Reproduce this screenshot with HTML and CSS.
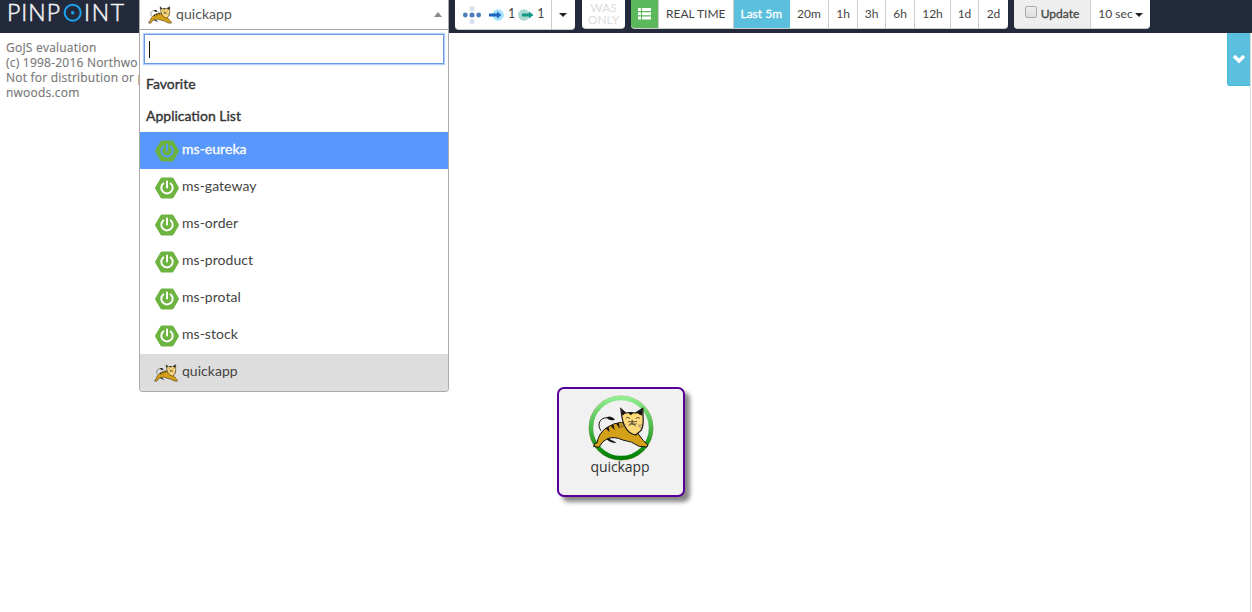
FILE: index.html
```html
<!DOCTYPE html>
<html lang="en">
<head>
<meta charset="utf-8">
<title>Pinpoint</title>
<link rel="stylesheet" href="styles.css">
</head>
<body>
<svg class="defs" width="0" height="0">
  <symbol id="cat" viewBox="36 50 168 125">
    <path d="M61 121C49 103 57 82 80 82l10 1" fill="none" stroke="#111" stroke-width="3"/>
    <path d="M80 80q10-6 23 7l-3 3q-15 0-20-6z" fill="#111"/>
    <path d="M84 135q0 14 16 17l8 7-16-3q-13-5-18-19z" fill="#111"/>
    <path d="M39 168l5-9 5-1q6-30 29-46 21-14 44-16l28 12q20 15 38 42l14 14-3 6-23-2q-22-16-49-19-26-12-46-4-16 7-23 22l-4 4z" fill="#d4a017" stroke="#111" stroke-width="3"/>
    <path d="M75 114l12 11-2-14zM91 107l12 13-4-17zM107 100l11 15-3-17z" fill="#111"/>
    <path d="M121 55l14 13q15-3 30 0l22-14 1 31q1 24-7 36l-16 13q-20-3-33-27-8-19-11-52z" fill="#ffda7a" stroke="#111" stroke-width="3.500"/>
    <path d="M122 57l13 11-9 8zM186 56l-18 12 17 8zM143 67l8 8 8-8z" fill="#111"/>
    <path d="M136 84q7-8 12 2M166 85q7-8 12-1M143 94h27M148 101h20M155 88v12M144 106l10-7 12 8" fill="none" stroke="#222" stroke-width="2.200"/>
    <path d="M119 105l16-2M118 112l17-5M174 104l15 1M174 108l13 7" fill="none" stroke="#555" stroke-width="2"/>
  </symbol>
  <symbol id="boot" viewBox="0 0 24 22">
    <path d="M7 0.5h10q1 0 1.6 1l5 8.500q.6 1 0 2l-5 8.500q-.6 1-1.600 1H7q-1 0-1.600-1l-5-8.500q-.6-1 0-2l5-8.500Q6 .5 7 .5z" fill="#6db33f"/>
    <path d="M8.300 6.400a5.700 5.700 0 1 0 7.400 0M12 4.600v6" fill="none" stroke="currentColor" stroke-width="2" stroke-linecap="round"/>
  </symbol>
</svg>
<header class="bar">
  <div class="brand">
    <svg width="120" height="24" viewBox="0 0 120 24"><circle cx="65.700" cy="12.700" r="8" fill="none" stroke="#1ba3ee" stroke-width="2"/><circle cx="65.700" cy="12.700" r="1.700" fill="#1ba3ee"/></svg>
    <span class="brand-a">PINP</span><span class="brand-b">INT</span>
  </div>
  <div class="select">
    <div class="chosen"><svg class="cat"><use href="#cat"/></svg><span>quickapp</span><i class="up"></i></div>
    <div class="drop">
      <div class="search"><i class="caret"></i></div>
      <div class="label">Favorite</div>
      <div class="label">Application List</div>
      <div class="item active"><svg class="boot"><use href="#boot"/></svg><span>ms-eureka</span></div>
      <div class="item"><svg class="boot"><use href="#boot"/></svg><span>ms-gateway</span></div>
      <div class="item"><svg class="boot"><use href="#boot"/></svg><span>ms-order</span></div>
      <div class="item"><svg class="boot"><use href="#boot"/></svg><span>ms-product</span></div>
      <div class="item"><svg class="boot"><use href="#boot"/></svg><span>ms-protal</span></div>
      <div class="item"><svg class="boot"><use href="#boot"/></svg><span>ms-stock</span></div>
      <div class="item current"><svg class="cat"><use href="#cat"/></svg>quickapp</div>
    </div>
  </div>
  <div class="group depth">
    <div class="btn hops">
      <svg width="20" height="20" viewBox="0 0 20 20"><g fill="#d5dfee"><circle cx="10" cy="3.500" r="2.500"/><circle cx="10" cy="16.500" r="2.500"/></g><g fill="#4a7ebb"><circle cx="3.300" cy="10" r="2.400"/><circle cx="10" cy="10" r="2.500"/><circle cx="16.700" cy="10" r="2.400"/></g></svg>
      <svg class="in" width="16" height="14" viewBox="0 0 16 14"><circle cx="10" cy="7" r="5.800" fill="#a7e0fa"/><path d="M1 5.600h8V3.500L13.500 7 9 10.500V8.400H1z" fill="#1f66c1"/></svg><span>1</span>
      <svg class="out" width="17" height="14" viewBox="0 0 17 14"><circle cx="6" cy="7" r="5.800" fill="#a8d8d0"/><path d="M4 5.600h7V3.500L15.500 7 11 10.500V8.400H4z" fill="#119985"/></svg><span>1</span>
    </div>
    <div class="btn toggle"><i class="down"></i></div>
  </div>
  <div class="group was"><span>WAS<br>ONLY</span></div>
  <div class="group times">
    <div class="btn green"><svg width="13" height="12" viewBox="0 0 13 12" fill="#fff"><path d="M0 0h3v3H0zM4 0h9v3H4zM0 4.300h3v3H0zM4 4.300h9v3H4zM0 8.600h3v3H0zM4 8.600h9v3H4z"/></svg></div>
    <div class="btn t-real">REAL TIME</div><div class="btn t-last">Last 5m</div><div class="btn t-20">20m</div><div class="btn t-1h">1h</div><div class="btn t-3h">3h</div><div class="btn t-6h">6h</div><div class="btn t-12">12h</div><div class="btn t-1d">1d</div><div class="btn t-2d">2d</div>
  </div>
  <div class="group refresh">
    <div class="btn update"><i class="check"></i>Update</div>
    <div class="btn every">10 sec<i class="down"></i></div>
  </div>
</header>
<main class="canvas">
  <div class="notice">GoJS evaluation<br>(c) 1998-2016 Northwo<br>Not for distribution or p<br>nwoods.com</div>
  <div class="tab"><svg width="14" height="10" viewBox="0 0 14 10"><path d="M2 2l5 5 5-5" fill="none" stroke="#fff" stroke-width="3.400"/></svg></div>
  <div class="node">
    <svg width="66" height="66" viewBox="0 0 66 66">
      <defs><linearGradient id="ring" x1="0" y1="0" x2="0" y2="1"><stop offset="0" stop-color="#90ee90"/><stop offset="1" stop-color="#008000"/></linearGradient></defs>
      <circle cx="33" cy="33" r="30" fill="none" stroke="#c9a78c" stroke-width="5"/>
      <circle cx="33" cy="33" r="30" fill="#f1f1f1" stroke="url(#ring)" stroke-width="4.400"/>
      <use href="#cat" x="4.500" y="12" width="56" height="41.700"/>
    </svg>
    <div class="node-name">quickapp</div>
  </div>
</main>
</body>
</html>
```
FILE: styles.css
```css
* { box-sizing: border-box; }
body { margin: 0; height: 612px; overflow: hidden; background: #fff; font-family: Lato, sans-serif; color: #444; }
.defs { position: absolute; }
svg { flex: none; }
.bar { height: 33px; display: flex; align-items: flex-start; background: #232a3b; }
.brand { position: relative; width: 139px; height: 33px; display: flex; flex: none; padding-left: 7px; color: #f3f3f5; font: 300 23px/25px Lato, sans-serif; letter-spacing: 1.7px; -webkit-text-stroke: .5px #f3f3f5; }
.brand svg { position: absolute; left: 7px; top: 0; }
.brand-a { width: 77px; letter-spacing: 1px; }
.select { position: relative; width: 310px; flex: none; margin-right: 6px; }
.chosen { height: 30px; display: flex; align-items: center; padding: 0 6px 1px 9px; background: #fff; border: 1px solid #aaa; border-top: 0; font-size: 14px; line-height: 17px; letter-spacing: .06px; color: #555; }
.chosen span { padding-bottom: 2px; }
.cat { width: 24px; height: 18px; margin-right: 3px; }
.chosen .cat { margin: 2px 4px 0 -1px; }
.up { margin-left: auto; border: 4px solid transparent; border-top: 0; border-bottom: 5px solid #888; }
.drop { position: absolute; z-index: 5; top: 30px; left: 0; width: 310px; height: 362px; background: #fff; border: 1px solid #aaa; border-top: 0; border-radius: 0 0 4px 4px; overflow: hidden; }
.search { height: 30px; margin: 4px 4px; border: 1px solid #6a98e4; box-shadow: 0 0 1px 1px #b5d0fa; padding: 6px 4px; width: 300px; }
.caret { display: block; width: 1px; height: 17px; background: #111; }
.label { height: 32px; line-height: 31px; padding-left: 6px; font-size: 14px; color: #333; -webkit-text-stroke: .35px #333; }
.item { height: 37px; display: flex; align-items: center; padding: 0 0 3px 14px; font-size: 14px; letter-spacing: .03px; color: #444; }
.item span { padding-bottom: 2px; }
.boot { width: 24px; height: 22px; margin: 4px 3px 0 1px; color: #fff; }
.item .cat { margin: 5px 4px 0 0; }
.active { background: #5897fb; color: #fff; -webkit-text-stroke: .3px #fff; }
.active .boot { color: #5897fb; -webkit-text-stroke: 0; }
.current { background: #ddd; height: 38px; padding-bottom: 5px; }
.group { height: 29px; display: flex; flex: none; background: #fff; border-bottom: 1px solid #ccc; border-radius: 0 0 4px 4px; overflow: hidden; margin-right: 6px; font-size: 12px; line-height: 28px; }
.btn { border-right: 1px solid #ccc; text-align: center; white-space: nowrap; flex: none; }
.btn:last-child { border-right: 0; }
.depth { width: 120px; height: 30px; margin-right: 7px; }
.hops { width: 97px; display: flex; align-items: center; padding: 1px 0 0 7px; font-size: 12.5px; }
.hops span { padding-bottom: 2px; }
.in { margin: 0 4px 0 6px; }
.out { margin: 0 2px 0 3px; }
.toggle { width: 23px; padding-right: 2px; }
.down { display: inline-block; border: 4px solid transparent; border-bottom: 0; border-top-color: #222; vertical-align: 1px; }
.was { width: 43px; color: #ddd; line-height: 12px; justify-content: center; text-align: center; padding-top: 2px; }
.times { width: 377px; }
.green { width: 28px; background: #5cb85c; padding-top: 8px; line-height: 0; }
.t-real { width: 74.5px; }
.t-last { width: 56.5px; background: #5bc0de; color: #fff; border-color: #5bc0de; -webkit-text-stroke: .3px #fff; }
.t-20 { width: 39px; }
.t-1h, .t-6h { width: 29px; }
.t-3h { width: 28px; }
.t-12 { width: 36px; }
.t-1d { width: 28px; }
.t-2d { width: 29px; }
.refresh { width: 136px; }
.update { width: 77px; background: #eee; -webkit-text-stroke: .3px #444; }
.check { display: inline-block; width: 12px; height: 12px; margin-right: 4px; border: 1px solid #aaa; border-radius: 2px; background: linear-gradient(#eee, #ddd); }
.every { width: 59px; }
.every .down { margin-left: 2px; }
.canvas { position: relative; width: 1251px; height: 579px; border-right: 1px solid #ddd; }
.notice { padding: 7px 0 0 6px; font: 12px/15px "Open Sans", sans-serif; letter-spacing: .22px; color: #777; white-space: nowrap; -webkit-text-stroke: .15px #777; }
.tab { position: absolute; right: 0; top: 0; width: 23px; height: 53px; display: flex; align-items: center; justify-content: center; background: #5bc0de; border: 1px solid #46b8da; border-top: 0; border-right: 0; border-radius: 0 0 0 3px; }
.node { position: absolute; left: 557px; top: 354px; width: 128px; height: 110px; border: 2px solid #550099; border-radius: 7px; background: #f1f1f1; box-shadow: 5px 5px 4px #888; display: flex; flex-direction: column; align-items: center; padding-top: 6px; }
.node-name { font: 14px/16px "Open Sans", sans-serif; letter-spacing: -.1px; margin-top: -2px; padding-right: 2px; color: #333; }
```
